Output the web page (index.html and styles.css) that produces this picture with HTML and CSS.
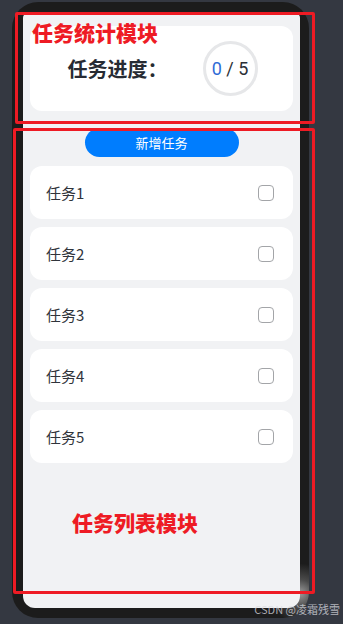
FILE: index.html
```html
<!DOCTYPE html>
<html lang="zh-CN">

<head>
    <meta charset="UTF-8">
    <meta name="viewport" content="width=device-width, initial-scale=1.0">
    <title>任务进度</title>
    <link rel="stylesheet" href="styles.css">
</head>

<body>
    <div class="stage">
        <div class="phone">
            <div class="screen">
                <div class="stats-card">
                    <span class="stats-title">任务进度：</span>
                    <div class="progress-ring">
                        <span class="done">0</span>&nbsp;/&nbsp;5
                    </div>
                </div>

                <button type="button" class="add-btn">新增任务</button>

                <ul class="task-list">
                    <li class="task-item"><span>任务1</span><span class="check"></span></li>
                    <li class="task-item"><span>任务2</span><span class="check"></span></li>
                    <li class="task-item"><span>任务3</span><span class="check"></span></li>
                    <li class="task-item"><span>任务4</span><span class="check"></span></li>
                    <li class="task-item"><span>任务5</span><span class="check"></span></li>
                </ul>
            </div>
        </div>

        <!-- annotation overlays -->
        <div class="mark mark-stats"></div>
        <div class="mark mark-list"></div>
        <div class="mark-label label-stats">任务统计模块</div>
        <div class="mark-label label-list">任务列表模块</div>
        <div class="watermark">CSDN @凌霜残雪</div>
    </div>
</body>

</html>
```

FILE: styles.css
```css
body {
    margin: 0;
    padding: 0;
    background-color: #343841;
    font-family: "Noto Sans CJK SC", "Noto Sans", sans-serif;
    color: #2b2f36;
}

.stage {
    position: relative;
    width: 343px;
    height: 624px;
    overflow: hidden;
}

.phone {
    margin: 2px 0 0 12px;
    width: 297px;
    height: 616px;
    box-sizing: border-box;
    padding: 12px 9px 10px 11px;
    background: radial-gradient(circle at 97% 96%, #9a9a9a 0, #4a4a4a 14px, #1c1c1c 30px);
    border-radius: 26px;
}

.screen {
    height: 100%;
    box-sizing: border-box;
    padding: 12px 7px 0;
    background: #f1f2f4;
    border-radius: 4px 4px 12px 12px;
    display: flex;
    flex-direction: column;
    align-items: center;
}

.stats-card {
    width: 100%;
    height: 85px;
    box-sizing: border-box;
    background: #fff;
    border-radius: 12px;
    display: flex;
    align-items: center;
    justify-content: center;
    gap: 35px;
    padding-left: 2px;
}

.stats-title {
    font-size: 20px;
    font-weight: bold;
    color: #272b33;
}

.progress-ring {
    width: 55px;
    height: 55px;
    box-sizing: border-box;
    border: 3px solid #e6e7e9;
    border-radius: 50%;
    display: flex;
    align-items: center;
    justify-content: center;
    font-family: Roboto, "Noto Sans", sans-serif;
    font-size: 18px;
    color: #2b2f36;
}

.done {
    color: #2f6bd6;
}

.add-btn {
    margin-top: 17px;
    width: 154px;
    height: 29px;
    border: none;
    border-radius: 15px;
    background: #007dfe;
    color: #fff;
    font-family: inherit;
    font-size: 13px;
    padding: 0;
}

.task-list {
    list-style: none;
    margin: 9px 0 0;
    padding: 0;
    width: 100%;
    display: flex;
    flex-direction: column;
    gap: 8px;
}

.task-item {
    height: 53px;
    box-sizing: border-box;
    padding: 0 19px 0 16px;
    background: #fff;
    border-radius: 12px;
    display: flex;
    align-items: center;
    justify-content: space-between;
    font-size: 15px;
    color: #30343b;
}

.check {
    width: 16px;
    height: 16px;
    box-sizing: border-box;
    border: 1px solid #a3a5a8;
    border-radius: 4px;
}

.mark {
    position: absolute;
    border: 3px solid #ee1b24;
    border-radius: 2px;
    box-sizing: border-box;
}

.mark-stats {
    left: 15px;
    top: 12px;
    width: 300px;
    height: 112px;
}

.mark-list {
    left: 13px;
    top: 128px;
    width: 302px;
    height: 466px;
}

.mark-label {
    position: absolute;
    font-size: 21px;
    font-weight: 900;
    color: #ee1b24;
    line-height: 1;
}

.label-stats {
    left: 32px;
    top: 22px;
}

.label-list {
    left: 72px;
    top: 512px;
}

.watermark {
    position: absolute;
    right: 3px;
    top: 603px;
    font-size: 11px;
    color: rgba(220, 222, 226, 0.75);
    line-height: 1.2;
}
```
